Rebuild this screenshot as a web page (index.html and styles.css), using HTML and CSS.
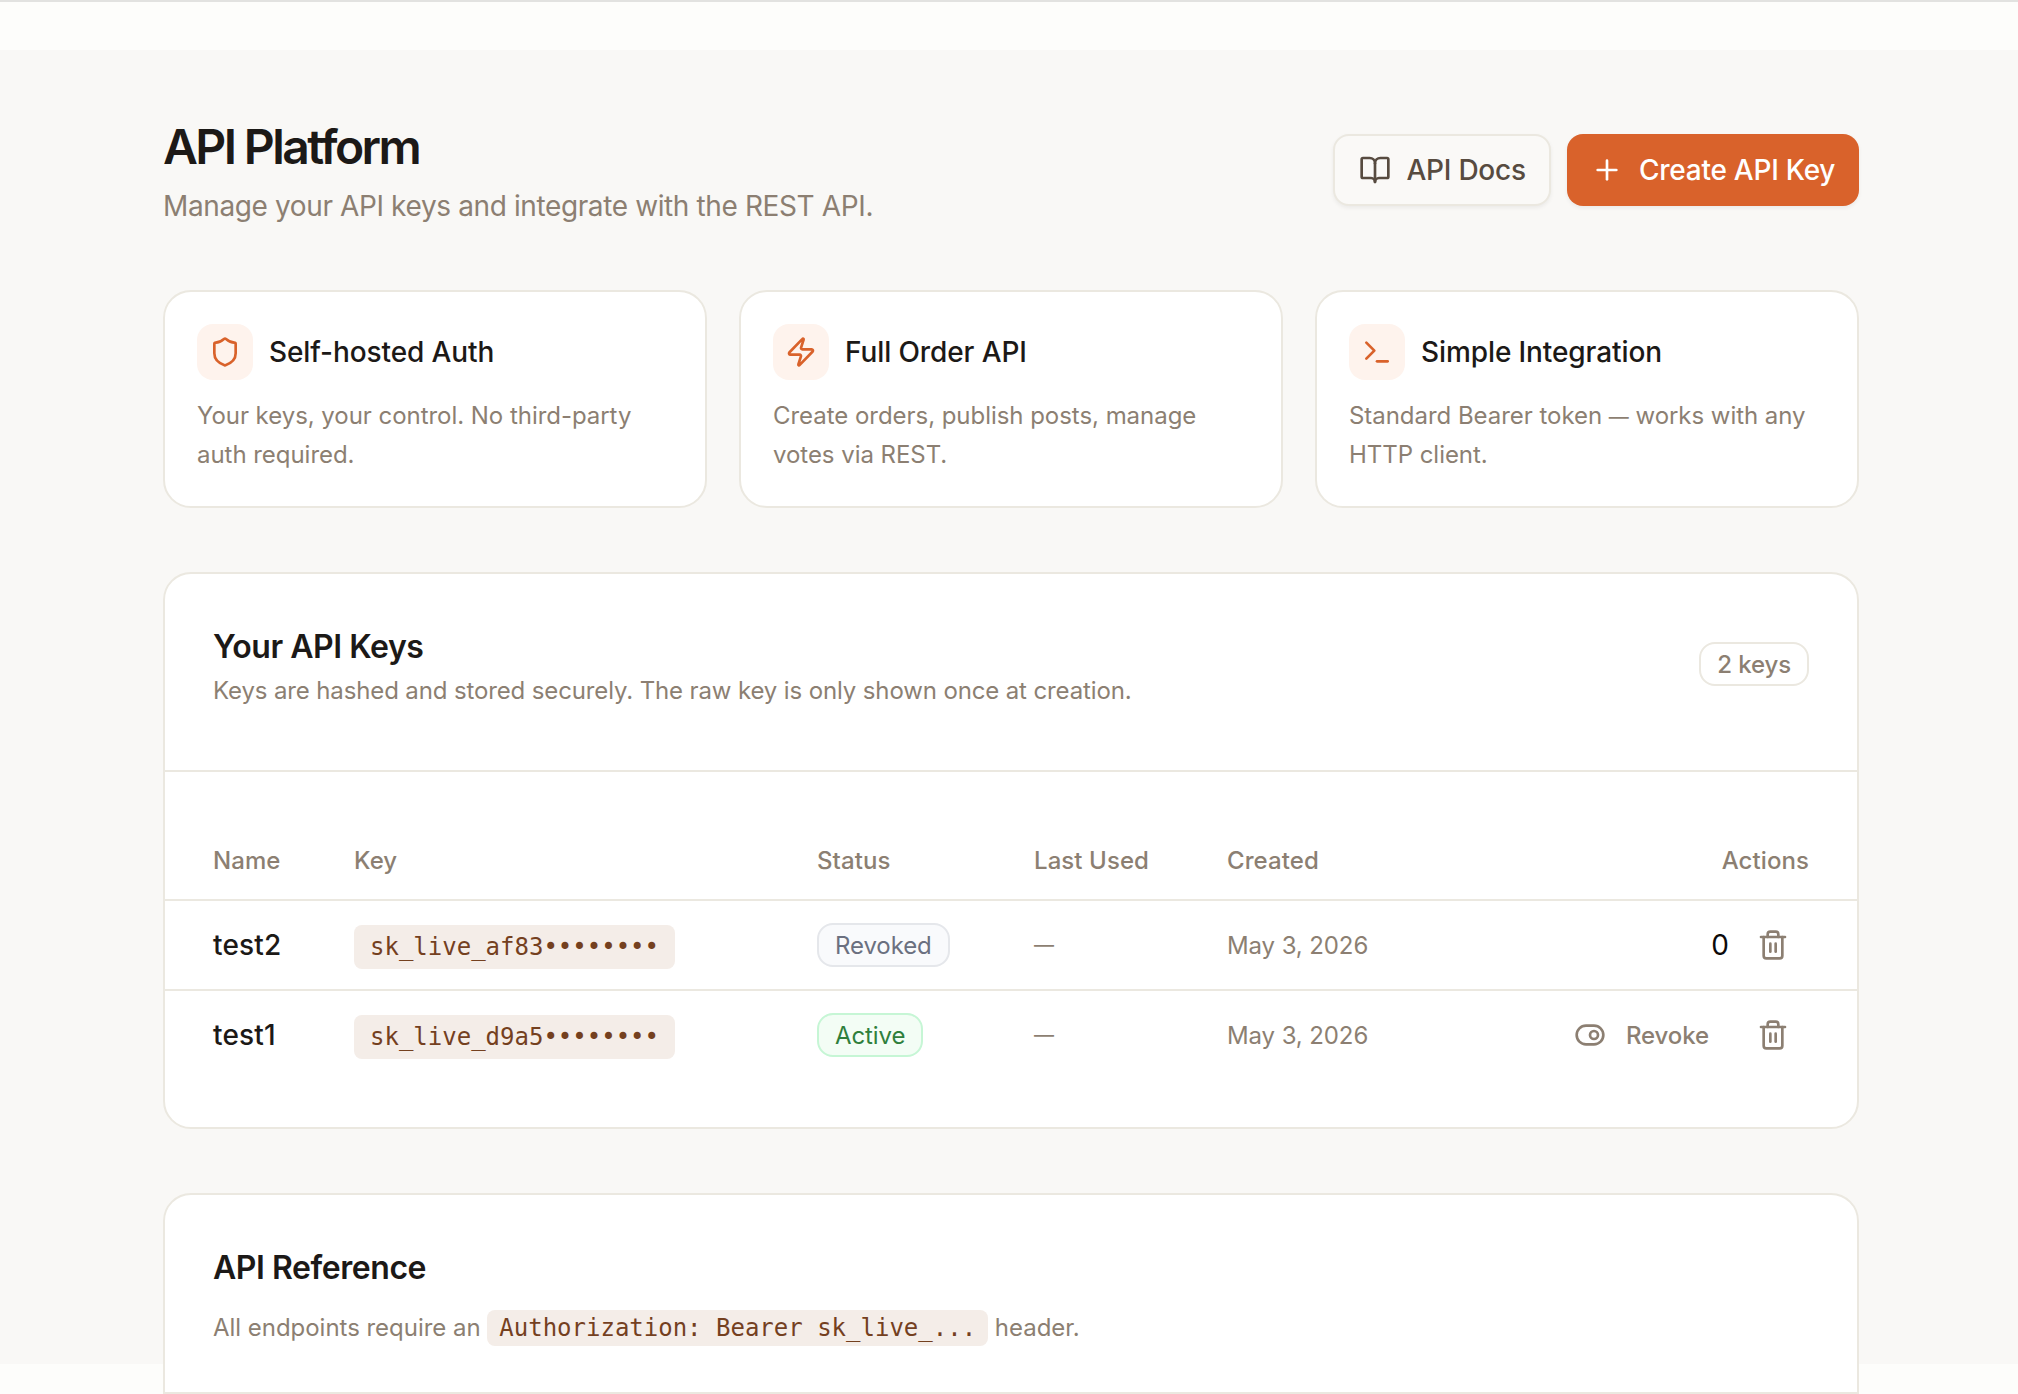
FILE: index.html
```html
<!DOCTYPE html>
<html lang="en">
<head>
  <meta charset="UTF-8" />
  <meta name="viewport" content="width=device-width, initial-scale=1.0" />
  <title>API Platform</title>
  <link rel="stylesheet" href="styles.css">
</head>
<body>
  <div class="topbar"></div>

  <main>
    <header class="page-header">
      <div>
        <h1>API Platform</h1>
        <p class="subtitle">Manage your API keys and integrate with the REST API.</p>
      </div>
      <div class="header-actions">
        <button class="btn btn-outline">
          <svg class="icon" viewBox="0 0 24 24"><path d="M12 7v14"/><path d="M3 18a1 1 0 0 1-1-1V4a1 1 0 0 1 1-1h5a4 4 0 0 1 4 4 4 4 0 0 1 4-4h5a1 1 0 0 1 1 1v13a1 1 0 0 1-1 1h-6a3 3 0 0 0-3 3 3 3 0 0 0-3-3z"/></svg>
          <span>API Docs</span>
        </button>
        <button class="btn btn-primary">
          <svg class="icon" viewBox="0 0 24 24"><path d="M5 12h14"/><path d="M12 5v14"/></svg>
          <span>Create API Key</span>
        </button>
      </div>
    </header>

    <section class="features">
      <div class="feature">
        <div class="feature-head">
          <div class="feature-icon">
            <svg class="icon" viewBox="0 0 24 24"><path d="M20 13c0 5-3.5 7.5-7.66 8.95a1 1 0 0 1-.67-.01C7.5 20.5 4 18 4 13V6a1 1 0 0 1 1-1c2 0 4.5-1.2 6.24-2.72a1.17 1.17 0 0 1 1.52 0C14.51 3.81 17 5 19 5a1 1 0 0 1 1 1z"/></svg>
          </div>
          <h3>Self-hosted Auth</h3>
        </div>
        <p>Your keys, your control. No third-party<br>auth required.</p>
      </div>
      <div class="feature">
        <div class="feature-head">
          <div class="feature-icon">
            <svg class="icon" viewBox="0 0 24 24"><path d="M4 14a1 1 0 0 1-.78-1.63l9.9-10.2a.5.5 0 0 1 .86.46l-1.92 6.02A1 1 0 0 0 13 10h7a1 1 0 0 1 .78 1.63l-9.9 10.2a.5.5 0 0 1-.86-.46l1.92-6.02A1 1 0 0 0 11 14z"/></svg>
          </div>
          <h3>Full Order API</h3>
        </div>
        <p>Create orders, publish posts, manage<br>votes via REST.</p>
      </div>
      <div class="feature">
        <div class="feature-head">
          <div class="feature-icon">
            <svg class="icon" viewBox="0 0 24 24"><path d="m4 17 6-6-6-6"/><path d="M12 19h8"/></svg>
          </div>
          <h3>Simple Integration</h3>
        </div>
        <p>Standard Bearer token <span class="dash">—</span> works with any<br>HTTP client.</p>
      </div>
    </section>

    <section class="panel">
      <div class="panel-head">
        <div>
          <h2>Your API Keys</h2>
          <p class="hint">Keys are hashed and stored securely. The raw key is only shown once at creation.</p>
        </div>
        <span class="badge">2 keys</span>
      </div>
      <div class="keys">
        <div class="row row-head">
          <span>Name</span>
          <span>Key</span>
          <span>Status</span>
          <span>Last Used</span>
          <span>Created</span>
          <span class="right">Actions</span>
        </div>
        <div class="row">
          <span class="name">test2</span>
          <span><code class="key">sk_live_af83••••••••</code></span>
          <span><span class="badge badge-revoked">Revoked</span></span>
          <span class="dash">—</span>
          <span class="date">May 3, 2026</span>
          <div class="actions">
            <span class="zero">0</span>
            <button class="ghost">
              <svg class="icon" viewBox="0 0 24 24"><path d="M10 11v6"/><path d="M14 11v6"/><path d="M19 6v14a2 2 0 0 1-2 2H7a2 2 0 0 1-2-2V6"/><path d="M3 6h18"/><path d="M8 6V4a2 2 0 0 1 2-2h4a2 2 0 0 1 2 2v2"/></svg>
            </button>
          </div>
        </div>
        <div class="row">
          <span class="name">test1</span>
          <span><code class="key">sk_live_d9a5••••••••</code></span>
          <span><span class="badge badge-active">Active</span></span>
          <span class="dash">—</span>
          <span class="date">May 3, 2026</span>
          <div class="actions">
            <button class="ghost">
              <svg class="icon" viewBox="0 0 24 24"><circle cx="15" cy="12" r="3"/><rect width="20" height="14" x="2" y="5" rx="7"/></svg>
              Revoke
            </button>
            <button class="ghost">
              <svg class="icon" viewBox="0 0 24 24"><path d="M10 11v6"/><path d="M14 11v6"/><path d="M19 6v14a2 2 0 0 1-2 2H7a2 2 0 0 1-2-2V6"/><path d="M3 6h18"/><path d="M8 6V4a2 2 0 0 1 2-2h4a2 2 0 0 1 2 2v2"/></svg>
            </button>
          </div>
        </div>
      </div>
    </section>

    <section class="panel reference">
      <div class="reference-head">
        <h2>API Reference</h2>
        <p class="hint">All endpoints require an <code>Authorization: Bearer sk_live_...</code> header.</p>
      </div>
    </section>
  </main>
</body>
</html>
```
FILE: styles.css
```css
* {
  box-sizing: border-box;
}
body {
  font-family: Inter, "Liberation Sans", sans-serif;
  margin: 0;
  height: 1394px;
  overflow: hidden;
  background: #fdfdfb;
  color: #1c1917;
}
h1, h2, h3, p {
  margin: 0;
}
button {
  font-family: inherit;
  cursor: pointer;
}
.topbar {
  height: 50px;
  border-top: 2px solid #e2e2e0;
}
main {
  height: 1314px;
  padding: 68px 159px 0 163px;
  background: #f9f8f6;
}
.icon {
  width: 32px;
  height: 32px;
  flex-shrink: 0;
  fill: none;
  stroke: currentColor;
  stroke-width: 2;
  stroke-linecap: round;
  stroke-linejoin: round;
}

.page-header {
  display: flex;
  justify-content: space-between;
  height: 172px;
}
h1 {
  font-size: 48px;
  line-height: 58px;
  font-weight: 600;
  letter-spacing: -2.6px;
}
.subtitle {
  margin-top: 10px;
  font-size: 28px;
  line-height: 40px;
  letter-spacing: -0.38px;
  color: #8c7f72;
}
.header-actions {
  display: flex;
  gap: 16px;
  margin-top: 16px;
}
.btn {
  display: flex;
  align-items: center;
  gap: 16px;
  height: 72px;
  padding: 0 24px;
  border: 0;
  border-radius: 16px;
  font-size: 28px;
  font-weight: 500;
  letter-spacing: -0.25px;
  white-space: nowrap;
  box-shadow: 0 2px 4px rgba(0, 0, 0, 0.06);
}
.btn-outline {
  width: 218.5px;
  border: 2px solid #ebe8e0;
  background: #faf9f7;
  color: #574b40;
}
.btn-primary {
  width: 292px;
  background: #d9622b;
  color: #fff;
}

.features {
  display: grid;
  grid-template-columns: repeat(3, 1fr);
  gap: 32px;
}
.feature {
  padding: 32px;
  background: #fff;
  border: 2px solid #ebe8e0;
  border-radius: 28px;
}
.feature-head {
  display: flex;
  align-items: center;
  gap: 16px;
  margin-bottom: 16px;
}
.feature-icon {
  display: flex;
  align-items: center;
  justify-content: center;
  width: 56px;
  height: 56px;
  border-radius: 16px;
  background: #fef3ed;
  color: #d9622b;
}
.feature h3 {
  font-size: 28px;
  font-weight: 500;
  letter-spacing: -0.1px;
}
.feature p {
  font-size: 24px;
  line-height: 39px;
  letter-spacing: -0.04px;
  white-space: nowrap;
  color: #8c7f72;
}
.dash {
  font-size: 20px;
  line-height: 1;
}

.panel {
  margin-top: 64px;
  background: #fff;
  border: 2px solid #ebe8e0;
  border-radius: 28px;
}
.panel-head {
  display: flex;
  justify-content: space-between;
  align-items: flex-start;
  height: 198px;
  padding: 53px 48px 0;
  border-bottom: 2px solid #ebe8e0;
}
.panel-head .badge {
  margin-top: 15px;
}
h2 {
  font-size: 32px;
  line-height: 40px;
  font-weight: 600;
  letter-spacing: -0.45px;
}
.hint {
  margin-top: 7px;
  font-size: 24px;
  line-height: 34px;
  letter-spacing: -0.13px;
  color: #8c7f72;
}
.badge {
  display: inline-flex;
  align-items: center;
  height: 44px;
  padding: 0 16px;
  border: 2px solid #ebe8e0;
  border-radius: 16px;
  font-size: 24px;
  font-weight: 500;
  letter-spacing: -0.1px;
  color: #8c7f72;
}
.badge-revoked {
  background: #f9fafc;
  border-color: #e5e7eb;
  font-weight: 400;
  color: #6b7080;
}
.badge-active {
  background: #f3fdf5;
  border-color: #c6f6d5;
  font-weight: 400;
  color: #2f7f3c;
}

.keys {
  padding: 48px 0;
}
.row {
  display: grid;
  grid-template-columns: 141px 463px 217px 193px 200px 1fr;
  align-items: center;
  height: 90px;
  padding: 0 48px;
  border-bottom: 2px solid #ebe8e0;
  font-size: 24px;
  color: #8c7f72;
}
.row:last-child {
  height: 88px;
  border-bottom: 0;
}
.row-head {
  height: 81px;
  padding-top: 2px;
  font-weight: 500;
  letter-spacing: 0.08px;
}
.right {
  text-align: right;
}
.name {
  font-size: 28px;
  font-weight: 500;
  letter-spacing: 0.15px;
  color: #1c1917;
}
.date {
  letter-spacing: -0.1px;
}
code {
  font-family: "DejaVu Sans Mono", "Liberation Mono", monospace;
  font-size: 24px;
  letter-spacing: 0;
  border-radius: 8px;
  background: #f4ede8;
  color: #74401f;
}
.key {
  display: block;
  width: fit-content;
  height: 44px;
  line-height: 44px;
  margin-top: 4px;
  padding: 0 16px;
}
.actions {
  display: flex;
  justify-content: flex-end;
  align-items: center;
  gap: 8px;
}
.zero {
  font-size: 28px;
  color: #0c0a09;
}
.ghost {
  display: flex;
  align-items: center;
  gap: 20px;
  height: 64px;
  padding: 0 20px;
  border: 0;
  background: none;
  font-size: 24px;
  font-weight: 500;
  letter-spacing: -0.1px;
  color: #8c7f72;
}

.reference {
  height: 240px;
}
.reference-head {
  height: 199px;
  padding: 53px 48px 0;
  border-bottom: 2px solid #ebe8e0;
}
.reference .hint {
  margin-top: 23px;
  letter-spacing: -0.03px;
}
.reference code {
  padding: 4px 12px;
}
```
